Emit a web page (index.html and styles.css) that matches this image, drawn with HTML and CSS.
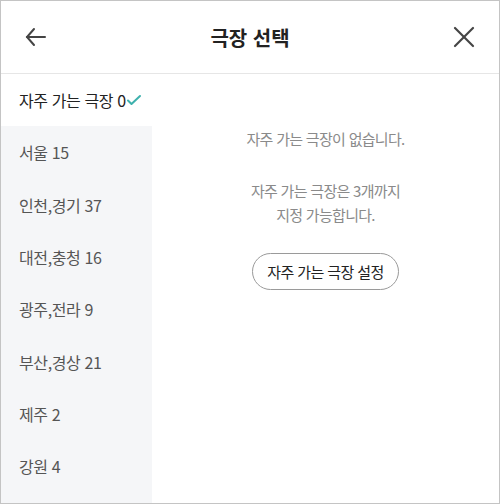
FILE: index.html
```html
<!DOCTYPE html>
<html lang="ko">
<head>
    <meta charset="UTF-8">
    <meta name="viewport" content="width=device-width, initial-scale=1.0">
    <title>극장 선택</title>
    <link rel="stylesheet" href="styles.css">
</head>
<body>
    <div class="frame">
        <header class="header">
            <button class="icon-btn back" aria-label="뒤로">
                <svg width="24" height="24" viewBox="0 0 24 24" fill="none" stroke="#444" stroke-width="2" stroke-linecap="round">
                    <path d="M3 12h18"/>
                    <path d="M10 4l-7 8 7 8"/>
                </svg>
            </button>
            <h1 class="title">극장 선택</h1>
            <button class="icon-btn close" aria-label="닫기">
                <svg width="24" height="24" viewBox="0 0 24 24" fill="none" stroke="#444" stroke-width="2.2" stroke-linecap="round">
                    <path d="M3 3l18 18"/>
                    <path d="M21 3L3 21"/>
                </svg>
            </button>
        </header>

        <div class="content">
            <ul class="regions">
                <li class="region region-fav">자주 가는 극장 0<span class="check">
                    <svg width="16" height="12" viewBox="0 0 16 12" fill="none" stroke="#3eb1ad" stroke-width="2" stroke-linecap="round" stroke-linejoin="round">
                        <path d="M2 6.5l3.5 3.5L14 2"/>
                    </svg></span></li>
                <li class="region">서울 15</li>
                <li class="region">인천,경기 37</li>
                <li class="region">대전,충청 16</li>
                <li class="region">광주,전라 9</li>
                <li class="region">부산,경상 21</li>
                <li class="region">제주 2</li>
                <li class="region">강원 4</li>
            </ul>

            <div class="panel">
                <p class="empty">자주 가는 극장이 없습니다.</p>
                <p class="notice">자주 가는 극장은 3개까지<br>지정 가능합니다.</p>
                <button class="btn-setting">자주 가는 극장 설정</button>
            </div>
        </div>
    </div>
</body>
</html>
```

FILE: styles.css
```css
body {
    margin: 0;
    font-family: "Noto Sans CJK KR", "Noto Sans", sans-serif;
    background: white;
}
.frame {
    width: 500px;
    height: 504px;
    box-sizing: border-box;
    border: 1px solid #c4c4c4;
    display: flex;
    flex-direction: column;
    overflow: hidden;
}
.header {
    height: 72px;
    flex-shrink: 0;
    display: grid;
    grid-template-columns: 1fr auto 1fr;
    align-items: center;
    padding: 0 23px;
    border-bottom: 1px solid #e6e6e6;
}
.icon-btn {
    background: none;
    border: none;
    padding: 0;
    width: 24px;
    height: 24px;
    cursor: pointer;
}
.close {
    justify-self: end;
}
.title {
    margin: 0;
    font-size: 20px;
    font-weight: bold;
    color: #222;
}
.content {
    flex: 1;
    display: flex;
}
.regions {
    list-style: none;
    margin: 0;
    padding: 0;
    width: 151px;
    background: #f5f6f8;
}
.region {
    height: 52.3px;
    display: flex;
    align-items: center;
    padding-left: 18px;
    font-size: 16px;
    color: #555;
    letter-spacing: -0.4px;
}
.region-fav {
    background: white;
    color: #222;
}
.check {
    display: flex;
}
.panel {
    flex: 1;
    display: flex;
    flex-direction: column;
    align-items: center;
    padding-top: 53px;
}
.empty, .notice {
    margin: 0;
    font-size: 15px;
    line-height: 24px;
    color: #8a8a8a;
    text-align: center;
    letter-spacing: -0.7px;
}
.notice {
    margin-top: 28px;
}
.btn-setting {
    margin-top: 26px;
    height: 37px;
    padding: 0 14px;
    background: white;
    border: 1px solid #9a9a9a;
    border-radius: 19px;
    font-family: inherit;
    font-size: 15px;
    color: #222;
    letter-spacing: -0.6px;
    cursor: pointer;
}
```
